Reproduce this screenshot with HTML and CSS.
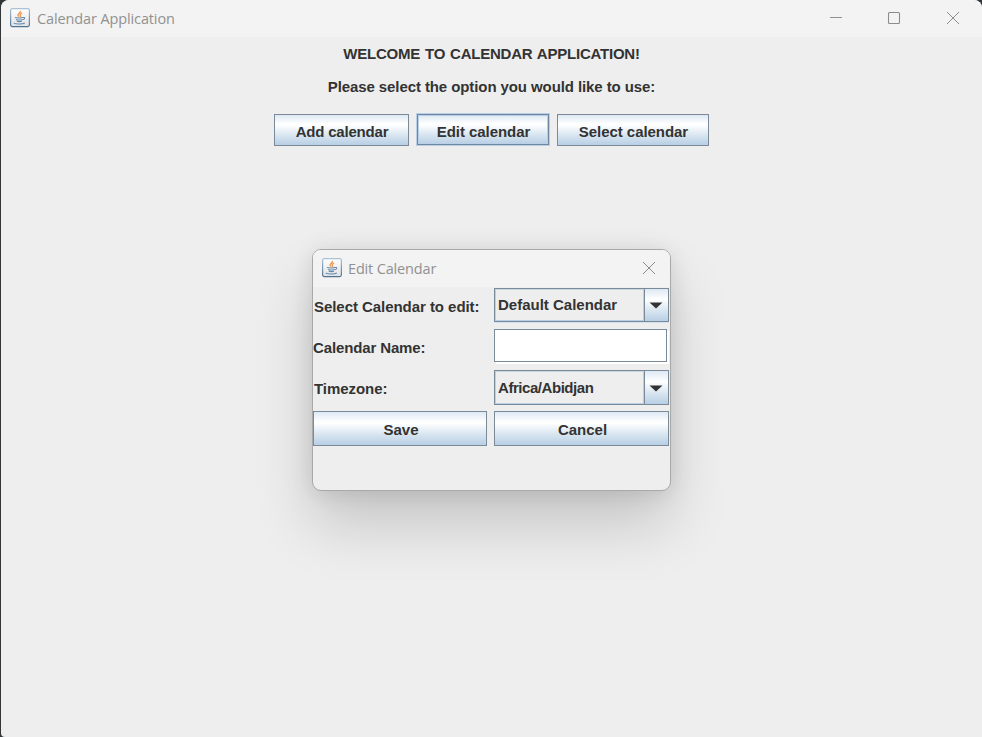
FILE: index.html
```html
<!DOCTYPE html>
<html lang="en">
<head>
<meta charset="utf-8">
<title>Calendar Application</title>
<link rel="stylesheet" href="styles.css">
</head>
<body>
<svg width="0" height="0" class="defs">
  <defs>
    <linearGradient id="tile" x1="0" y1="0" x2="0" y2="1"><stop offset="0" stop-color="#fff"/><stop offset="1" stop-color="#dfe2e5"/></linearGradient>
    <linearGradient id="edge" x1="0" y1="0" x2="0" y2="1"><stop offset="0" stop-color="#a9c2d6"/><stop offset="1" stop-color="#527493"/></linearGradient>
    <symbol id="java" viewBox="0 0 20 20">
      <rect x=".6" y=".6" width="18.8" height="18" rx="1.8" fill="url(#tile)" stroke="url(#edge)" stroke-width="1.2"/>
      <path d="M10.4 3C11.500 4.800 7.200 5.500 8 7.200C8.300 7.900 8.900 8.200 9.200 8.800M12.200 5C10.200 5.700 9.700 6.500 10.500 7.300C11 7.900 10.700 8.400 10.300 8.800" fill="none" stroke="#ef9448" stroke-width="1.300"/>
      <path d="M5 9.500C6.500 10.100 11.500 10.100 13 9.500M6 11.500C7.500 12 11 12 12.500 11.500M6.800 13.200C8 13.600 10.700 13.600 12 13.200M13 9.500C15.400 9 15 11.200 12.700 11.800M4 14.800C4 16.300 13 16.300 14.800 15" fill="none" stroke="#6588a6" stroke-width="1.100"/>
    </symbol>
  </defs>
</svg>
<main class="window">
  <header class="titlebar">
    <svg class="java"><use href="#java"/></svg>
    <span class="title main-title">Calendar Application</span>
    <div class="controls">
      <svg width="14" height="14"><path d="M2 6.500H14" stroke="#919191"/></svg>
      <svg width="14" height="14"><rect x="1.500" y="1.500" width="11" height="11" rx="1" fill="none" stroke="#8c8c8c" stroke-width="1.100"/></svg>
      <svg width="14" height="14"><path d="M1 1L13 13M13 1L1 13" stroke="#8c8c8c"/></svg>
    </div>
  </header>
  <section class="content">
    <p class="welcome"><span>WELCOME TO CALENDAR APPLICATION!</span></p>
    <p class="prompt"><span>Please select the option you would like to use:</span></p>
    <div class="actions">
      <button class="button add">Add calendar</button>
      <button class="button edit focused">Edit calendar</button>
      <button class="button select">Select calendar</button>
    </div>
  </section>
</main>
<section class="dialog">
  <header class="dialog-bar">
    <svg class="java"><use href="#java"/></svg>
    <span class="title dialog-title">Edit Calendar</span>
    <svg class="close" width="14" height="14"><path d="M1 1L13 13M13 1L1 13" stroke="#8c8c8c"/></svg>
  </header>
  <div class="form">
    <label class="l1">Select Calendar to edit:</label>
    <div class="combo first"><span class="value">Default Calendar</span><span class="arrow"><svg width="14" height="7"><path d="M.5.500H13.500L7 6.500Z" fill="#333"/></svg></span></div>
    <label class="l2">Calendar Name:</label>
    <div class="field"></div>
    <label class="l3">Timezone:</label>
    <div class="combo"><span class="value zone">Africa/Abidjan</span><span class="arrow"><svg width="14" height="7"><path d="M.5.500H13.500L7 6.500Z" fill="#333"/></svg></span></div>
    <button class="button save">Save</button>
    <button class="button cancel">Cancel</button>
  </div>
</section>
</body>
</html>
```
FILE: styles.css
```css
* { box-sizing: border-box; }
body {
  margin: 0;
  width: 982px;
  height: 737px;
  overflow: hidden;
  background: #333639;
  color: #333;
  font: bold 15px/18px "Liberation Sans", Arial, sans-serif;
}
.defs { position: absolute; }
.window {
  height: 737px;
  margin-left: 1px;
  background: #eee;
  border-radius: 8px 8px 0 4px;
  overflow: hidden;
}
.titlebar {
  height: 37px;
  padding: 0 22px 1px 9px;
  display: flex;
  align-items: center;
  background: #f3f3f3;
}
.java { width: 20px; height: 20px; flex: none; }
.title {
  margin-left: 7px;
  padding-top: 2px;
  color: #919191;
  font: 14.5px/20px "Open Sans", sans-serif;
  white-space: nowrap;
}
.main-title { letter-spacing: -.12px; }
.dialog-title { letter-spacing: -.16px; margin-left: 6px; }
.controls { margin-left: auto; display: flex; gap: 45px; }
.controls svg { display: block; }
.content { padding-top: 8px; text-align: center; }
.content p { height: 18px; margin: 0 0 15px; white-space: nowrap; }
.welcome { letter-spacing: -.22px; word-spacing: 1px; }
.prompt { letter-spacing: -.09px; }
.actions { display: flex; margin: 18px 0 0 273px; }
.button {
  height: 32px;
  margin: 0;
  padding: 3px 0 0;
  border: 1px solid #7a8a99;
  border-radius: 0;
  background: linear-gradient(#dde8f3 0%, #fff 30%, #fff 34%, #dbe7f1 65%, #b8cfe5 100%);
  color: #333;
  font: inherit;
  text-align: center;
}
.add { width: 135px; padding-left: 1px; letter-spacing: -.2px; }
.edit { width: 132px; margin: 0 8px; padding-left: 1px; letter-spacing: -.05px; }
.focused { height: 31px; padding-top: 4px; border-color: #6f86a0; box-shadow: inset 0 0 0 1px #b8cfe5, 0 0 0 1px #b8cfe5; }
.select { width: 152px; padding-left: 1px; letter-spacing: -.05px; }
.dialog {
  position: absolute;
  left: 312px;
  top: 249px;
  width: 359px;
  height: 242px;
  border: 1px solid #a9a9a9;
  border-radius: 9px;
  background: #eee;
  overflow: hidden;
  box-shadow: 0 34px 58px rgba(0,0,0,.17), 0 2px 22px rgba(0,0,0,.11);
}
.dialog-bar {
  height: 37px;
  padding: 0 14px 1px 9px;
  display: flex;
  align-items: center;
  background: #f3f3f3;
}
.close { margin-left: auto; }
.form {
  display: grid;
  grid-template-columns: 174px 175px;
  grid-template-rows: 34px 36px 35px 35px;
  column-gap: 7px;
  row-gap: 6px;
  padding-top: 1px;
}
label { align-self: center; white-space: nowrap; padding-top: 3px; letter-spacing: -.05px; }
.l1, .l3 { padding-left: 1px; }
.l2 { padding-top: 4px; letter-spacing: -.13px; }
.combo {
  display: flex;
  border: 1px solid #7a8a99;
}
.first { box-shadow: 0 1px 0 #d5e1ec; }
.value { flex: 1; padding: 6px 0 0 2px; border: 1px solid #b8cfe5; border-top-color: #cbd7e2; line-height: 18px; }
.zone { padding-top: 7px; letter-spacing: -.45px; }
.arrow {
  width: 24px;
  display: flex;
  align-items: center;
  justify-content: center;
  padding: 1px 1px 0 0;
  border-left: 1px solid #7a8a99;
  background: linear-gradient(#dde8f3, #fff 32%, #dbe7f1 65%, #b8cfe5);
}
.field {
  width: 173px;
  height: 33px;
  margin-top: 1px;
  border: 1px solid #7a8a99;
  background: #fff;
  box-shadow: 2px 2px 0 #fff;
}
.save, .cancel { height: 35px; padding-left: 2px; }
```
